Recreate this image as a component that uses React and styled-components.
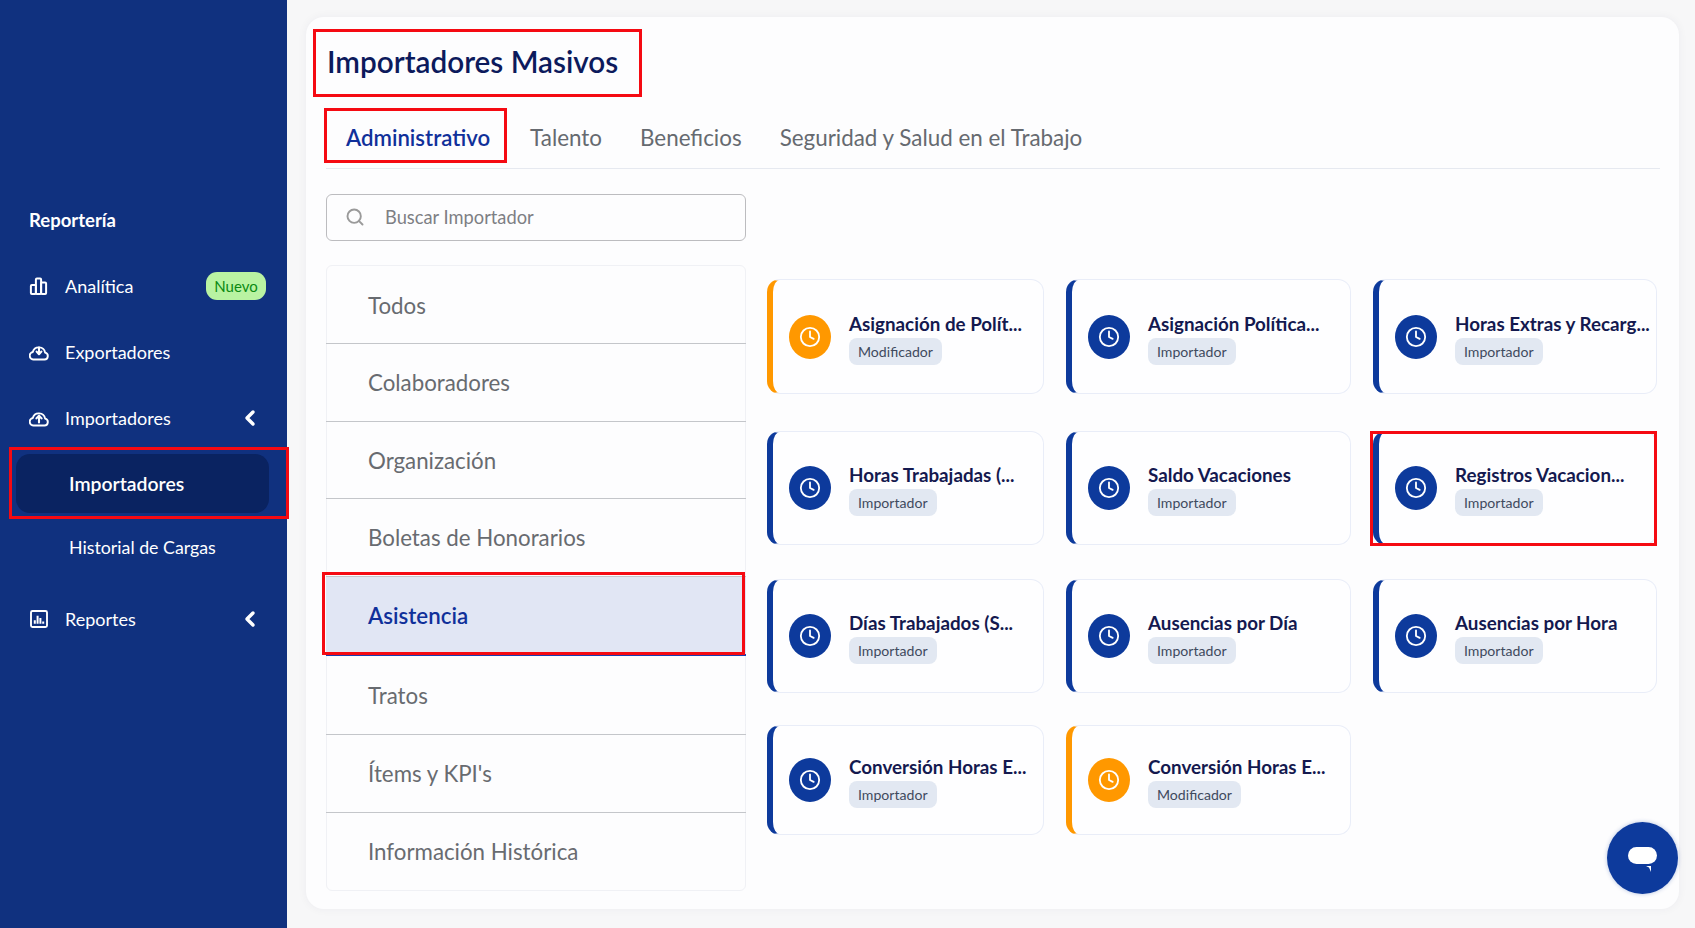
import React from 'react';
import styled, { createGlobalStyle } from 'styled-components';
import { Clock, ChevronLeft, Search } from 'lucide-react';

const Global = createGlobalStyle`
  html, body { margin: 0; padding: 0; background: #f7f7f8; }
  body { font-family: "Lato", "Noto Sans", sans-serif; }
  * { box-sizing: border-box; }
`;

const Page = styled.div`
  display: flex;
  width: 1695px;
  height: 928px;
  overflow: hidden;
  position: relative;
`;
const Sidebar = styled.aside`
  width: 287px;
  flex: none;
  background: #10317f;
  color: #fff;
  padding-top: 203px;
`;
const SectionTitle = styled.div`
  line-height: 34px;
  padding-left: 29px;
  font-size: 18.5px;
  font-weight: 700;
  margin-bottom: 16px;
`;
const NavRow = styled.div`
  height: 66px;
  display: flex;
  align-items: center;
  padding: 0 21px 0 30px;
  font-size: 18px;
  svg.lead { width: 20px; height: 20px; flex: none; margin-right: 16px; margin-left: -1px; }
`;
const NavLabel = styled.span`
  flex: 1;
`;
const Badge = styled.span`
  width: 60px;
  height: 28px;
  border-radius: 11px;
  background: #b9f3a2;
  color: #0b8a12;
  font-size: 15px;
  display: flex;
  align-items: center;
  justify-content: center;
`;
const Chevron = styled(ChevronLeft)`
  width: 24px;
  height: 24px;
  margin-right: 4px;
  stroke-width: 3.5;
`;
const SubItem = styled.div`
  position: relative;
  height: 59px;
  margin: ${p => (p.$active ? '3px 18px 0 16px' : '4px 18px 10px 16px')};
  padding: ${p => (p.$active ? '0 0 1px 53px' : '0 0 0 53px')};
  display: flex;
  align-items: center;
  border-radius: 14px;
  font-size: ${p => (p.$active ? 19.4 : 17.8)}px;
  font-weight: ${p => (p.$active ? 600 : 400)};
  background: ${p => (p.$active ? '#0a2361' : 'transparent')};
`;
const Mark = styled.span`
  position: absolute;
  border: 3px solid #f50a12;
  pointer-events: none;
  z-index: 5;
  top: ${p => p.$t}px;
  left: ${p => p.$l}px;
  right: ${p => p.$r}px;
  bottom: ${p => p.$b}px;
`;
const Main = styled.main`
  flex: 1;
  padding: 17px 16px 19px 19px;
`;
const Panel = styled.section`
  height: 892px;
  background: #fdfdfe;
  border-radius: 18px;
  box-shadow: 0 0 10px rgba(30, 40, 80, 0.05);
  padding: 0 19px 0 20px;
`;
const Title = styled.h1`
  position: relative;
  margin: 0;
  height: 90px;
  line-height: 90px;
  padding-left: 1px;
  font-size: 29.7px;
  font-weight: 600;
  color: #0c1a5c;
`;
const Tabs = styled.nav`
  display: flex;
  height: 62px;
  border-bottom: 1px solid #e6e9f0;
`;
const Tab = styled.div`
  position: relative;
  padding: ${p => (p.$active ? '0 21px 0 20px' : '0 19px')};
  display: flex;
  align-items: center;
  font-size: ${p => (p.$active ? 22.2 : 22.4)}px;
  font-weight: ${p => (p.$active ? 600 : 400)};
  color: ${p => (p.$active ? '#10309a' : '#666a70')};
`;
const SearchBox = styled.div`
  margin-top: 25px;
  width: 420px;
  height: 47px;
  border: 1px solid #bcbcbf;
  border-radius: 6px;
  display: flex;
  align-items: center;
  padding: 0 0 2px 18px;
  gap: 20px;
  color: #7d7f84;
  font-size: 18.3px;
  svg { width: 20px; height: 20px; color: #9a9a9a; stroke-width: 2.3; }
`;
const Body = styled.div`
  display: flex;
  margin-top: 24px;
`;
const List = styled.div`
  width: 420px;
  flex: none;
  height: 626px;
  border: 1px solid #f0f1f5;
  border-radius: 6px;
  overflow: visible;
`;
const ListItem = styled.div`
  position: relative;
  height: ${p => p.$h}px;
  margin: 0 -1px;
  padding: 1px 0 0 42px;
  display: flex;
  align-items: center;
  font-size: 22.3px;
  font-weight: ${p => (p.$active ? 600 : 400)};
  color: ${p => (p.$active ? '#10309a' : '#686b70')};
  background: ${p => (p.$active ? '#e1e6f4' : 'transparent')};
  border-bottom: ${p => (p.$active ? '2px solid #1b3fb0' : p.$last ? 'none' : '1px solid #c4c6ca')};
`;
const Grid = styled.div`
  margin-left: 21px;
  padding-top: 14px;
  display: grid;
  grid-template-columns: 277px 285px 284px;
  grid-template-rows: 151.5px 148.5px 146px 110px;
  column-gap: 22px;
`;
const Card = styled.article`
  position: relative;
  height: ${p => p.$h}px;
  background: #fefeff;
  border: 1px solid #e9edf8;
  border-left: 6px solid ${p => (p.$orange ? '#ff9800' : '#0d3a9c')};
  border-radius: 13px;
  display: flex;
  align-items: center;
  padding-left: 16px;
  gap: 18px;
`;
const Circle = styled.div`
  width: 42px;
  height: 44px;
  flex: none;
  border-radius: 50%;
  background: ${p => (p.$orange ? '#ff9800' : '#0d3a9c')};
  color: #fff;
  display: flex;
  align-items: center;
  justify-content: center;
`;
const CardText = styled.div`
  display: flex;
  flex-direction: column;
  align-items: flex-start;
  gap: 2px;
  margin-top: 3.5px;
`;
const CardTitle = styled.div`
  font-size: 18.8px;
  font-weight: 700;
  color: #14194f;
  white-space: nowrap;
  line-height: 24px;
`;
const Chip = styled.span`
  height: 27px;
  line-height: 27px;
  padding: 0 9px;
  border-radius: 8px;
  background: #e2e8f2;
  color: #3f4a5e;
  font-size: 14.1px;
`;
const ChatButton = styled.button`
  position: absolute;
  left: 1607px;
  top: 822px;
  width: 71px;
  height: 72px;
  border: 0;
  border-radius: 50%;
  background: #0d3a9c;
  box-shadow: 0 0 4px rgba(13, 58, 156, 0.3);
  display: flex;
  align-items: center;
  justify-content: center;
  z-index: 6;
`;

const BarsIcon = () => (
  <svg className="lead" viewBox="0 0 20 20" fill="none" stroke="#fff" strokeWidth="2" strokeLinejoin="round">
    <rect x="1.9" y="9" width="5" height="9" rx="1" />
    <rect x="6.9" y="2.5" width="5.2" height="15.5" rx="1" />
    <rect x="12.1" y="6.5" width="5" height="11.5" rx="1" />
  </svg>
);
const CloudIcon = ({ down }) => (
  <svg className="lead" viewBox="0 0 20 20" fill="none" stroke="#fff" strokeWidth="1.9" strokeLinecap="round" strokeLinejoin="round">
    <path d="M5 17.5h10.5a3.5 3.5 0 0 0 .6-6.9 6.3 6.3 0 0 0-12.3-.6A3.8 3.8 0 0 0 5 17.5Z" />
    {down ? (
      <path d="M10 5.5v6M7.6 9.6 10 12.2l2.4-2.6" strokeWidth="2.1" />
    ) : (
      <path d="M10 14.5V8M7.4 10.4 10 7.6l2.6 2.8" strokeWidth="2.1" />
    )}
  </svg>
);
const ReportIcon = () => (
  <svg className="lead" viewBox="0 0 20 20" fill="none" stroke="#fff" strokeWidth="1.9" strokeLinejoin="round">
    <rect x="2" y="2" width="16" height="16" rx="1.5" />
    <path d="M5.8 14.8v-3.5M8.6 14.8V6.8M11.4 14.8V9M14.2 14.8v-2.4" strokeWidth="2" />
  </svg>
);

const cards = [
  ['Asignación de Polít...', 'Modificador', true, 115],
  ['Asignación Política...', 'Importador', false, 115],
  ['Horas Extras y Recarg...', 'Importador', false, 115],
  ['Horas Trabajadas (...', 'Importador', false, 114],
  ['Saldo Vacaciones', 'Importador', false, 114],
  ['Registros Vacacion...', 'Importador', false, 114, true],
  ['Días Trabajados (S...', 'Importador', false, 114],
  ['Ausencias por Día', 'Importador', false, 114],
  ['Ausencias por Hora', 'Importador', false, 114],
  ['Conversión Horas E...', 'Importador', false, 110],
  ['Conversión Horas E...', 'Modificador', true, 110],
];
const lists = [
  ['Todos', 78], ['Colaboradores', 77.5], ['Organización', 77.5], ['Boletas de Honorarios', 77.5],
  ['Asistencia', 79], ['Tratos', 79], ["Ítems y KPI's", 78], ['Información Histórica', 77],
];

export default function App() {
  return (
    <Page>
      <Global />
      <Sidebar>
        <SectionTitle>Reportería</SectionTitle>
        <NavRow><BarsIcon /><NavLabel>Analítica</NavLabel><Badge>Nuevo</Badge></NavRow>
        <NavRow><CloudIcon down /><NavLabel>Exportadores</NavLabel></NavRow>
        <NavRow><CloudIcon /><NavLabel>Importadores</NavLabel><Chevron /></NavRow>
        <SubItem $active>Importadores<Mark $t={-7} $l={-7} $r={-20} $b={-6} /></SubItem>
        <SubItem>Historial de Cargas</SubItem>
        <NavRow><ReportIcon /><NavLabel>Reportes</NavLabel><Chevron /></NavRow>
      </Sidebar>
      <Main>
        <Panel>
          <Title>Importadores Masivos<Mark $t={12} $l={-13} $r={1018} $b={10} /></Title>
          <Tabs>
            <Tab $active>Administrativo<Mark $t={1} $l={-2} $r={4} $b={5} /></Tab>
            <Tab>Talento</Tab>
            <Tab>Beneficios</Tab>
            <Tab>Seguridad y Salud en el Trabajo</Tab>
          </Tabs>
          <SearchBox><Search />Buscar Importador</SearchBox>
          <Body>
            <List>
              {lists.map(([l, h], i) => (
                <ListItem key={l} $h={h} $active={l === 'Asistencia'} $last={i === lists.length - 1}>
                  {l}
                  {l === 'Asistencia' && <Mark $t={-5} $l={-4} $r={1} $b={-1} />}
                </ListItem>
              ))}
            </List>
            <Grid>
              {cards.map(([title, chip, orange, h, marked]) => (
                <Card key={title + chip} $orange={orange} $h={h}>
                  <Circle $orange={orange}><Clock size={22} strokeWidth={2} /></Circle>
                  <CardText>
                    <CardTitle>{title}</CardTitle>
                    <Chip>{chip}</Chip>
                  </CardText>
                  {marked && <Mark $t={-1} $l={-9} $r={-1} $b={-2} />}
                </Card>
              ))}
            </Grid>
          </Body>
        </Panel>
      </Main>
      <ChatButton aria-label="Chat">
        <svg width="32" height="28" viewBox="0 0 32 28">
          <rect x="1" y="3" width="29" height="17" rx="8.5" fill="#fff" />
          <path d="M19 22h5v6l-2-4.5Z" fill="#fff" />
        </svg>
      </ChatButton>
    </Page>
  );
}
